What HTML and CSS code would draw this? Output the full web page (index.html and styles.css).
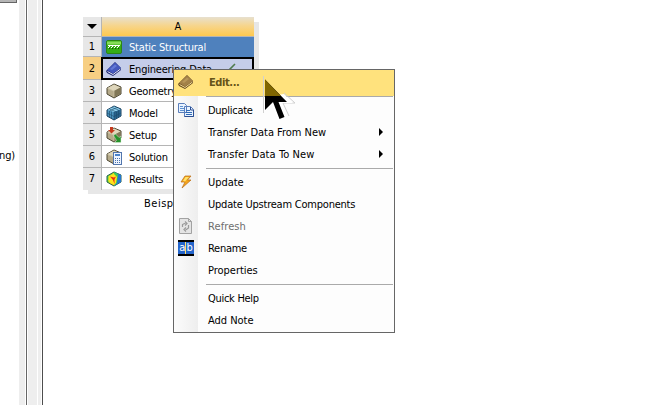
FILE: index.html
```
<!DOCTYPE html>
<html lang="en">
<head>
<meta charset="utf-8">
<title>Project Schematic</title>
<link rel="stylesheet" href="styles.css">
</head>
<body>
<svg class="defs" width="0" height="0">
  <defs>
    <linearGradient id="heat" x1="0" y1="0" x2="1" y2=".4"><stop offset="0" stop-color="#26c8d0"/><stop offset=".25" stop-color="#5cd83a"/><stop offset=".5" stop-color="#ffe21c"/><stop offset="1" stop-color="#f08010"/></linearGradient>
    <g id="cube"><path d="M1 5 8 1l7 3v7l-7 4-7-4z" fill="#b5aa8a" stroke="#4c4632"/><path d="M1.500 5 8 1.500l6.500 3L8 8z" fill="#ded6bb"/><path d="M8 8l6.500-3.500v6L8 14.500z" fill="#817757"/><path d="M1.500 5.500 8 8v6" fill="none" stroke="#d0c7aa" stroke-width=".7"/></g>
  </defs>
</svg>
<div class="app">
  <aside class="side"><div class="stub"></div><div class="cut">ng)</div></aside>
  <div class="split"><i class="s1"></i><i class="s2"></i><i class="s3"></i><i class="s4"></i><i class="s5"></i></div>
  <main class="canvas">
    <section class="system">
      <div class="row head"><span class="num"><svg width="10" height="6"><path d="M0 0h10L5 5z"/></svg></span><span class="cell">A</span></div>
      <div class="row title"><span class="num">1</span><span class="cell">
        <svg class="ico" viewBox="0 0 16 16"><rect x=".5" y="1.500" width="15" height="13" rx="1.500" fill="#35ad16" stroke="#2a8614"/><path d="M1 2.500h14v3H1z" fill="#86dc59"/><path d="M2 6.500h12" stroke="#fff"/><path d="M2 9l2-2M5 9l2-2M8 9l2-2M11 9l2-2" stroke="#fff"/><path d="M3 9.500h11" stroke="#174e0b" stroke-dasharray="1 2"/></svg><span class="t">Static Structural</span></span></div>
      <div class="row picked"><span class="num">2</span><span class="cell">
        <svg class="ico" viewBox="0 0 16 16"><path d="M0 10 9 1l6 6v2l-8 6-6-3z" fill="#1c2770"/><path d="M1 9 9 1.500l6 5.500-8 5.500z" fill="#4659bd"/><path d="M4 8l5-4.500 2 1.500-5 4z" fill="#6379d6"/><path d="M1.500 10.500 7 13.500l7.500-5.500" fill="none" stroke="#e5e8fb"/></svg><span class="t">Engineering Data</span>
        <svg class="tick" viewBox="0 0 14 12"><path d="M1 7l3 3 9-9" fill="none" stroke="#4f7b4d" stroke-width="1.600"/></svg></span></div>
      <div class="row"><span class="num">3</span><span class="cell"><svg class="ico" viewBox="0 0 16 16"><use href="#cube"/></svg><span class="t">Geometry</span></span></div>
      <div class="row"><span class="num">4</span><span class="cell">
        <svg class="ico" viewBox="0 0 16 16"><path d="M1 5 8 1l7 3v7l-7 4-7-4z" fill="#4b94bf" stroke="#173e5c"/><path d="M1.500 5 8 1.500l6.500 3L8 7z" fill="#8fcfec"/><path d="M8 7l6.500-2.500v6L8 14.500z" fill="#28638c"/><path d="M1 8l7 3.500L15 8M3.500 4l7 3v7M6 2.500 12.500 5v7M3.500 6v6.500M8 7v8M5.500 6.500V13M3.500 6 11 2.500" fill="none" stroke="#1b4b6c" stroke-width=".6"/></svg><span class="t">Model</span></span></div>
      <div class="row"><span class="num">5</span><span class="cell">
        <svg class="ico" viewBox="0 0 16 16"><use href="#cube"/><path d="M4 0h3v3h2L5.500 6.500 2 3h2z" fill="#c53a1d"/><path d="M7.500 8.500l2-1.500 3.500 3.500L15 9v6.500H8.500l2-2z" fill="#26932b" stroke="#e2f2dc" stroke-width=".5"/></svg><span class="t">Setup</span></span></div>
      <div class="row"><span class="num">6</span><span class="cell">
        <svg class="ico" viewBox="0 0 16 16"><use href="#cube"/><rect x="7.500" y="3.500" width="8" height="12" fill="#eef5ff" stroke="#5276ad"/><path d="M9 6h5" stroke="#4c84cc" stroke-width="2"/><path d="M9 9.500h5M9 11.500h5M9 13.500h5" stroke="#4770ad" stroke-dasharray="1 1"/></svg><span class="t">Solution</span></span></div>
      <div class="row"><span class="num">7</span><span class="cell">
        <svg class="ico" viewBox="0 0 16 16"><path d="M1 5 8 1l7 3v7l-7 4-7-4z" fill="url(#heat)" stroke="#276148"/><path d="M8 1l7 3v7l-7 4V8l4-3z" fill="#2476d0"/><path d="M8 1l4 2-1 9-3 3z" fill="#3ccb55"/><path d="M2.500 5 8 3l3 3-1 6-2 2-5.500-4z" fill="#ffe31c"/><path d="M4 5.500l4 1 2-1-1.500 3V13L7 9z" fill="#e82f12"/></svg><span class="t">Results</span></span></div>
      <div class="caption">Beispiel</div>
    </section>

    <nav class="menu">
      <div class="item hot"><span class="mi"><svg class="ico" viewBox="0 0 16 16"><path d="M0 10 9 1l6 6v2l-8 6-6-3z" fill="#65491c"/><path d="M1 9 9 1.500l6 5.500-8 5.500z" fill="#a28149"/><path d="M4 8l5-4.500 2 1.500-5 4z" fill="#b79659"/><path d="M1.500 10.500 7 13.500l7.500-5.500" fill="none" stroke="#f4dd99"/></svg></span><b class="t">Edit...</b></div>
      <hr class="first">
      <div class="item"><span class="mi"><svg class="ico" viewBox="0 0 16 16"><path d="M.5 1.500h6l2 2v7h-8zM6.500 4.500h6l3 3v7h-9z" fill="#e9f3ff" stroke="#5a7ebb"/><path d="M2 4.500h3M2 6.500h4M2 8.500h4" stroke="#5e91d1"/><path d="M8 8.500h4M8 10.500h6M8 12.500h6" stroke="#306bb8"/><path d="M12.500 5v3h3v6.500h-9" fill="none" stroke="#2c4e91"/></svg></span><span class="t">Duplicate</span></div>
      <div class="item wide"><span class="t">Transfer Data From New</span><i class="arrow"></i></div>
      <div class="item wider"><span class="t">Transfer Data To New</span><i class="arrow"></i></div>
      <hr>
      <div class="item wide"><span class="mi"><svg class="ico" viewBox="0 0 16 16"><path d="M7 2h6L9.500 6H13l-9 8 3-6H3z" fill="#f5a51c" stroke="#b96b16" stroke-width=".7"/><path d="M7.500 3H11L7 7.500 5 7z" fill="#ffe46b"/></svg></span><span class="t">Update</span></div>
      <div class="item"><span class="t long">Update Upstream Components</span></div>
      <div class="item off wider"><span class="mi"><svg class="ico" viewBox="0 0 16 16"><path d="M1.500.5h9l3 3v12h-12z" fill="#e4e4e4" stroke="#a2a2a2"/><path d="M10.500.5v3h3" fill="none" stroke="#a2a2a2"/><path d="M4.500 9V6.500l2-1h1M7 3.500l2 2-2 2M10.500 7v3l-2 1.500h-1M8 9.500l-2 2 2 2" fill="none" stroke="#999" stroke-width="1.200"/></svg></span><span class="t">Refresh</span></div>
      <div class="item"><span class="mi"><span class="ab"><span>a</span><i></i><span>b</span></span></span><span class="t">Rename</span></div>
      <div class="item wide"><span class="t">Properties</span></div>
      <hr>
      <div class="item"><span class="t">Quick Help</span></div>
      <div class="item wide"><span class="t">Add Note</span></div>
    </nav>
    <svg class="pointer" viewBox="0 0 36 48"><path d="M1.500 3v37M22 20l11 10H21l6 13" fill="none" stroke="#d0d0d0"/><path d="M2 24v15l8-7 6 15 9-3-5-14h11L22 21z" fill="#fff"/><path d="M3 6.500V37l8-8 6.500 17 5-2-6-15H25z"/><path d="M3 6.500V23h16z" fill="#806600"/></svg>
  </main>
</div>
</body>
</html>
```
FILE: styles.css
```
* { box-sizing: border-box; }
body { margin: 0; background: #fff; color: #000; font: 11px/22px "DejaVu Sans Condensed", "DejaVu Sans", sans-serif; font-stretch: condensed; overflow: hidden; }
.defs { position: absolute; }
.app { display: flex; width: 670px; height: 405px; }
.side { width: 19px; flex: none; overflow: hidden; }
.stub { width: 17px; height: 3px; background: #b5b5b5; border: solid #666; border-width: 0 1px 1px 0; }
.cut { margin-top: 142px; margin-left: -1px; letter-spacing: -.1px; }
.split { display: flex; width: 24px; flex: none; }
.s1 { width: 6px; background: #eee; }
.s2 { width: 1px; margin: 0 1px; background: #666; }
.s3 { width: 9px; background: #eee; }
.s4 { width: 3px; margin-left: 1px; background: #eee; }
.s5 { width: 1px; margin-left: 1px; background: #4d4d4d; }
.canvas { position: relative; flex: 1; padding: 17px 0 0 40px; }
.system { width: 171px; height: 172px; background: #fff; box-shadow: 5px 5px 0 #e7e7e7; }
.row { display: flex; height: 22px; }
.num { width: 19px; flex: none; background: #e7e7e7; border: solid #b5b5b5; border-width: 0 1px 1px 0; text-align: center; line-height: 22px; }
.cell { display: flex; flex: 1; align-items: center; padding-left: 4px; border-bottom: 1px solid #b5b5b5; white-space: nowrap; }
.row:nth-child(8) span { border-bottom: 0; }
.cell .t { margin-left: 7px; padding-top: 2px; line-height: 20px; letter-spacing: -.2px; }
.ico { display: block; width: 16px; height: 16px; flex: none; }
.head { height: 20px; }
.head .num { display: flex; align-items: center; justify-content: center; }
.head .cell { justify-content: center; padding: 0; background: linear-gradient(#e7e0cf, #f6d58d 45%, #ffc94f); }
.title { height: 20px; }
.title .num { line-height: 20px; }
.title .cell { background: #4f81bd; color: #fff; border-bottom: 0; }
.title .t { padding-top: 1px; }
.picked { height: 23px; }
.picked .num { background: #f7cf83; line-height: 24px; }
.picked .cell { margin-left: -1px; padding-left: 3px; background: #c5cde9; border: 2px solid #000; }
.tick { width: 14px; height: 12px; margin-left: 10px; }
.caption { padding: 3px 0 0 61px; letter-spacing: .5px; }
.menu { position: absolute; left: 130px; top: 69px; width: 222px; height: 264px; border: 1px solid #666; background: linear-gradient(90deg, #fcfcfc, #eee 24px, #fdfdfd 24px); }
.item { display: flex; align-items: center; height: 22px; padding-left: 34px; white-space: nowrap; letter-spacing: -.29px; }
.item .t { padding-top: 2px; }
.wide { letter-spacing: -.03px; }
.wider { letter-spacing: .1px; }
.long { letter-spacing: -.22px; }
.mi { display: flex; width: 16px; height: 16px; flex: none; margin: 0 14px 0 -30px; }
.hot { height: 26px; background: #ffe27d; color: #665318; }
.hot .mi { margin-top: -2px; }
.hot .t { margin-left: 1px; padding-top: 0; letter-spacing: -.4px; }
hr { height: 1px; margin: 3px 1px 2px 32px; border: 0; background: #aaa; }
hr.first { margin-top: 0; }
.arrow { margin-left: auto; margin-right: 11px; border: solid transparent; border-width: 4px 0 4px 4px; border-left-color: #000; }
.off { color: #6d6d6d; }
.ab { display: flex; width: 16px; height: 16px; justify-content: center; background: #2465cb; border: solid #000; border-width: 2px 0; color: #fff; line-height: 11px; font-size: 11px; letter-spacing: 0; }
.ab i { width: 1px; height: 12px; background: #ffe36d; flex: none; }
.pointer { position: absolute; left: 219px; top: 73px; width: 36px; height: 48px; }
```
